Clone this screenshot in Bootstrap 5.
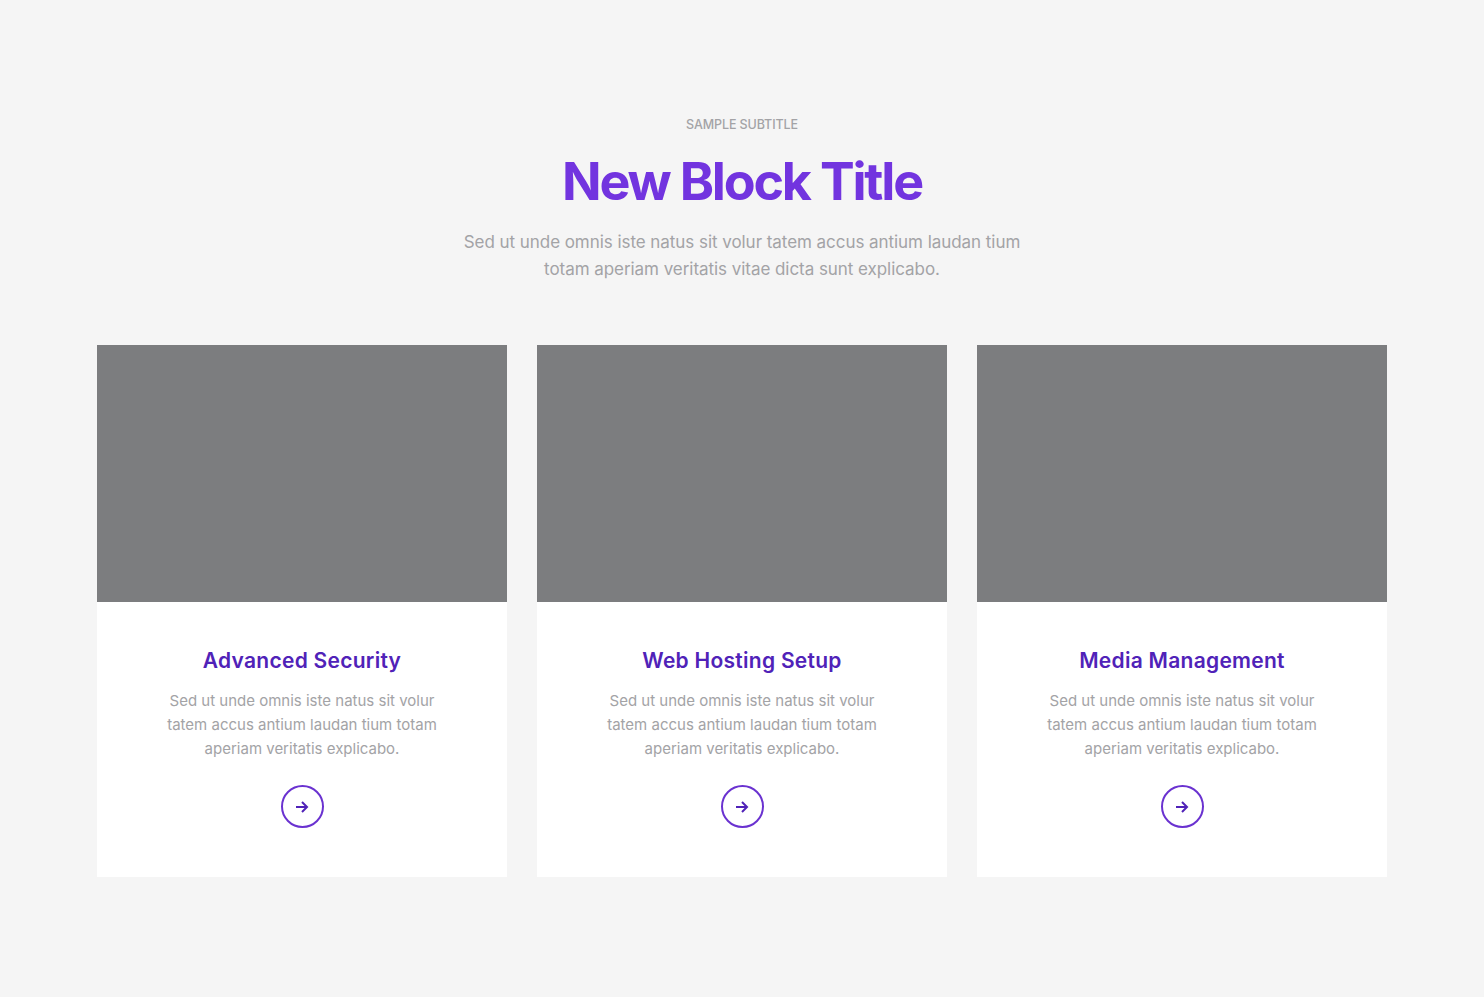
<!DOCTYPE html>
<html lang="en">
<head>
    <meta charset="UTF-8">
    <title>New Block Title</title>
    <meta name="viewport" content="width=device-width, initial-scale=1">
    <link href="https://cdn.jsdelivr.net/npm/bootstrap@5.3.3/dist/css/bootstrap.min.css" rel="stylesheet">
    <style>
        body {
            background-color: #f5f5f5;
            font-family: "Inter", "Noto Sans", sans-serif;
            color: #a3a3a6;
        }

        .block-wrap {
            --bs-gutter-x: 30px;
            padding-top: 117px;
            padding-bottom: 120px;
        }

        .block-wrap .row {
            --bs-gutter-x: 30px;
        }

        .block-sub {
            font-size: 12.5px;
            line-height: 16px;
            letter-spacing: -0.1px;
            font-weight: 500;
            margin-bottom: 20px;
        }

        .block-title {
            color: #7234df;
            font-size: 52px;
            line-height: 58px;
            font-weight: 700;
            letter-spacing: -2.2px;
            margin-bottom: 18px;
        }

        .block-lead {
            font-size: 17px;
            line-height: 27px;
            letter-spacing: -0.05px;
            margin-bottom: 62px;
        }

        .feature-card {
            --bs-card-border-width: 0;
            --bs-card-border-radius: 0;
            --bs-card-inner-border-radius: 0;
            --bs-card-bg: #fff;
            height: 532px;
        }

        .feature-thumb {
            height: 257px;
            background-color: #7c7d7f;
        }

        .feature-body {
            padding: 45px 60px 0;
        }

        .feature-name {
            color: #5022b8;
            font-size: 21px;
            line-height: 28px;
            font-weight: 600;
            letter-spacing: 0.27px;
            margin-bottom: 14px;
        }

        .feature-text {
            font-size: 15px;
            line-height: 24px;
            margin-bottom: 24px;
        }

        .arrow-btn {
            width: 43px;
            height: 43px;
            border: 2px solid #6a32d0;
            color: #5022b8;
        }
    </style>
</head>
<body>

<div class="container block-wrap">
    <div class="text-center">
        <div class="block-sub">SAMPLE SUBTITLE</div>
        <h1 class="block-title">New Block Title</h1>
        <p class="block-lead">Sed ut unde omnis iste natus sit volur tatem accus antium laudan tium<br>totam aperiam veritatis vitae dicta sunt explicabo.</p>
    </div>

    <div class="row">
        <div class="col-4">
            <div class="card feature-card text-center">
                <div class="feature-thumb"></div>
                <div class="feature-body">
                    <h5 class="feature-name">Advanced Security</h5>
                    <p class="feature-text">Sed ut unde omnis iste natus sit volur tatem accus antium laudan tium totam aperiam veritatis explicabo.</p>
                    <a href="#" class="arrow-btn rounded-circle d-inline-flex align-items-center justify-content-center">
                        <svg width="14" height="14" viewBox="0 0 14 14" fill="none" stroke="currentColor" stroke-width="2"><path d="M1 7h11M7 2l5 5-5 5"/></svg>
                    </a>
                </div>
            </div>
        </div>
        <div class="col-4">
            <div class="card feature-card text-center">
                <div class="feature-thumb"></div>
                <div class="feature-body">
                    <h5 class="feature-name">Web Hosting Setup</h5>
                    <p class="feature-text">Sed ut unde omnis iste natus sit volur tatem accus antium laudan tium totam aperiam veritatis explicabo.</p>
                    <a href="#" class="arrow-btn rounded-circle d-inline-flex align-items-center justify-content-center">
                        <svg width="14" height="14" viewBox="0 0 14 14" fill="none" stroke="currentColor" stroke-width="2"><path d="M1 7h11M7 2l5 5-5 5"/></svg>
                    </a>
                </div>
            </div>
        </div>
        <div class="col-4">
            <div class="card feature-card text-center">
                <div class="feature-thumb"></div>
                <div class="feature-body">
                    <h5 class="feature-name">Media Management</h5>
                    <p class="feature-text">Sed ut unde omnis iste natus sit volur tatem accus antium laudan tium totam aperiam veritatis explicabo.</p>
                    <a href="#" class="arrow-btn rounded-circle d-inline-flex align-items-center justify-content-center">
                        <svg width="14" height="14" viewBox="0 0 14 14" fill="none" stroke="currentColor" stroke-width="2"><path d="M1 7h11M7 2l5 5-5 5"/></svg>
                    </a>
                </div>
            </div>
        </div>
    </div>
</div>

<script src="https://cdn.jsdelivr.net/npm/bootstrap@5.3.3/dist/js/bootstrap.bundle.min.js"></script>
</body>
</html>
